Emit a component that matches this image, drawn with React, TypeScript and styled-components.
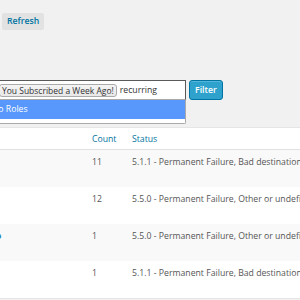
import React from "react";
import styled, { createGlobalStyle } from "styled-components";

const GlobalStyle = createGlobalStyle`
  html, body {
    margin: 0;
    padding: 0;
    background: #f1f1f1;
    overflow: hidden;
  }
  body {
    font-family: "Open Sans", "Liberation Sans", sans-serif;
    font-size: 8.5px;
    color: #444;
  }
`;

const TABLE_SHIFT = 194;
const FIRST_COL = 81 + TABLE_SHIFT;
const FILTER_SHIFT = 56;

const Page = styled.div`
  width: 300px;
  height: 300px;
  overflow: hidden;
`;

const Toolbar = styled.div`
  display: flex;
  padding: 13px 0 0 2px;
`;

const RefreshButton = styled.button`
  font-family: inherit;
  font-size: 8.7px;
  font-weight: 600;
  color: #0074a2;
  background: #e2e2e2;
  border: none;
  border-radius: 2px;
  height: 17px;
  line-height: 17px;
  padding: 0 5px;
  margin: 0;
`;

const FilterBar = styled.div`
  display: flex;
  align-items: flex-start;
  gap: 3px;
  margin: 50px 0 0 -${FILTER_SHIFT}px;
`;

const SelectBox = styled.div`
  position: relative;
  width: ${186 + FILTER_SHIFT}px;
`;

const TokenField = styled.div`
  display: flex;
  align-items: center;
  gap: 3px;
  box-sizing: border-box;
  height: 20px;
  padding: 0 2px;
  background: #fff;
  border: 1px solid #5a5a5a;
  border-bottom-color: #aaa;
`;

const Token = styled.span`
  display: inline-block;
  height: 13px;
  line-height: 12px;
  box-sizing: border-box;
  padding: 0 2px;
  font-size: 8.5px;
  color: #333;
  white-space: nowrap;
  background: linear-gradient(#f4f4f4, #e8e8e8);
  border: 1px solid #aaa;
  border-radius: 3px;
`;

const SearchText = styled.span`
  font-size: 8.7px;
  color: #333;
  white-space: nowrap;
`;

const Dropdown = styled.ul`
  position: absolute;
  top: 100%;
  left: 0;
  right: 0;
  margin: 0;
  padding: 0 0 4px;
  list-style: none;
  background: #fff;
  border: 1px solid #aaa;
  border-top: none;
  border-radius: 0 0 2px 2px;
  z-index: 2;
`;

const Option = styled.li<{ $active?: boolean }>`
  height: 19px;
  line-height: 19px;
  padding: 0 3px;
  font-size: 8.7px;
  white-space: nowrap;
  color: ${(p) => (p.$active ? "#fff" : "#444")};
  background: ${(p) => (p.$active ? "#5897fb" : "#fff")};
`;

const FilterButton = styled.button`
  font-family: inherit;
  font-size: 8.7px;
  font-weight: 600;
  color: #fff;
  background: #2ea2cc;
  border: 1px solid #0074a2;
  border-radius: 3px;
  height: 20px;
  line-height: 17px;
  padding: 0 5px;
  margin: 0;
  box-shadow: inset 0 1px 0 rgba(120, 200, 230, 0.5);
`;

const Table = styled.div`
  margin: 27px 0 0 -${TABLE_SHIFT}px;
  width: 700px;
  background: #fff;
  border: 1px solid #e5e5e5;
`;

const HeadRow = styled.div`
  display: grid;
  grid-template-columns: ${FIRST_COL}px 40px 1fr;
  height: 22px;
  box-sizing: border-box;
  border-bottom: 1px solid #e1e1e1;
`;

const HeadCell = styled.div`
  padding: 3px 10px;
  line-height: 16px;
  font-size: 8.7px;
  color: #0074a2;
  white-space: nowrap;
`;

const Row = styled.div<{ $alt?: boolean }>`
  display: grid;
  grid-template-columns: ${FIRST_COL}px 40px 1fr;
  height: 37px;
  background: ${(p) => (p.$alt ? "#f9f9f9" : "#fff")};
`;

const Cell = styled.div`
  padding: 4px 10px;
  line-height: 16px;
  font-size: 8.7px;
  color: #555;
  white-space: nowrap;
  overflow: hidden;
`;

const TitleLink = styled.a`
  color: #0074a2;
  font-weight: 600;
  text-decoration: none;
`;

const rows = [
  { title: "Welcome", count: "11", status: "5.1.1 - Permanent Failure, Bad destination mailbox address" },
  { title: "Weekly Digest", count: "12", status: "5.5.0 - Permanent Failure, Other or undefined protocol status" },
  { title: "Your Subscription Renewal Reminder Memo", count: "1", status: "5.5.0 - Permanent Failure, Other or undefined protocol status" },
  { title: "Trial Ending", count: "1", status: "5.1.1 - Permanent Failure, Bad destination mailbox address" },
];

export default function App() {
  return (
    <Page>
      <GlobalStyle />
      <Toolbar>
        <RefreshButton>Refresh</RefreshButton>
      </Toolbar>
      <FilterBar>
        <SelectBox>
          <TokenField>
            <Token>Customers</Token>
            <Token>You Subscribed a Week Ago!</Token>
            <SearchText>recurring</SearchText>
          </TokenField>
          <Dropdown>
            <Option $active>Subscribed to Roles</Option>
          </Dropdown>
        </SelectBox>
        <FilterButton>Filter</FilterButton>
      </FilterBar>
      <Table>
        <HeadRow>
          <HeadCell>Email</HeadCell>
          <HeadCell>Count</HeadCell>
          <HeadCell>Status</HeadCell>
        </HeadRow>
        {rows.map((r, i) => (
          <Row key={i} $alt={i % 2 === 0}>
            <Cell>
              <TitleLink href="#">{r.title}</TitleLink>
            </Cell>
            <Cell>{r.count}</Cell>
            <Cell>{r.status}</Cell>
          </Row>
        ))}
      </Table>
    </Page>
  );
}
